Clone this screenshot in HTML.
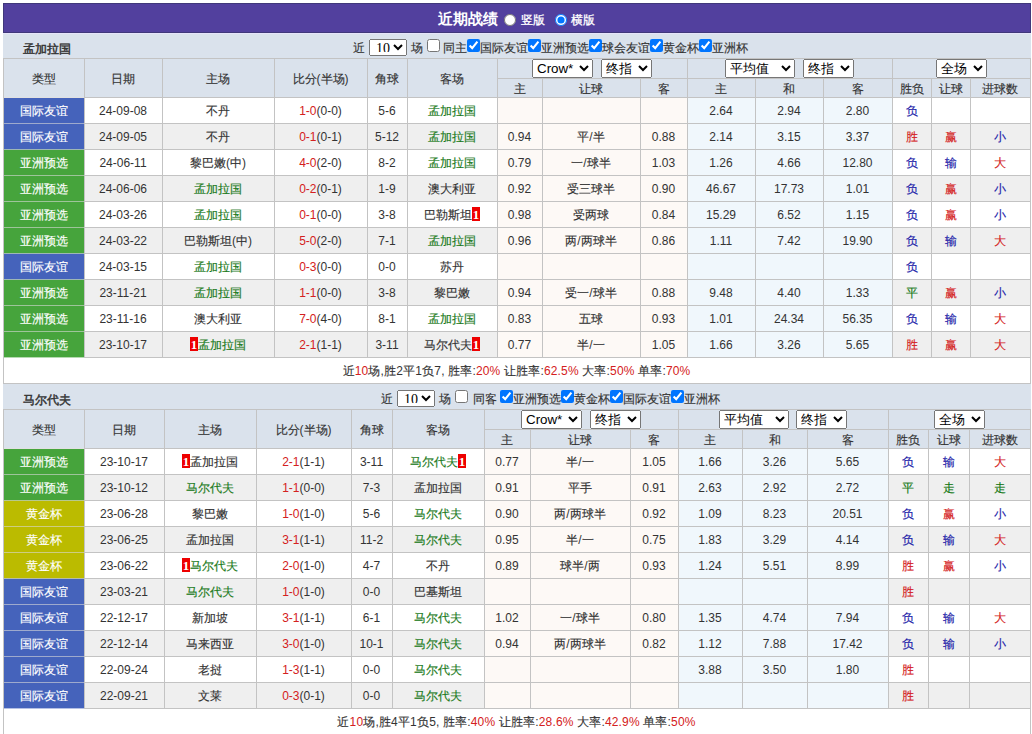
<!DOCTYPE html><html><head><meta charset="utf-8"><style>
html,body{margin:0;padding:0;background:#fff;}
body{width:1032px;height:734px;overflow:hidden;position:relative;font-family:"Liberation Sans",sans-serif;font-size:12px;color:#333;}
.a{position:absolute;}
.t{text-align:center;white-space:nowrap;overflow:visible;}
.tn i{-webkit-text-stroke:0.45px #333;}
i{font-style:normal;-webkit-text-stroke:0.15px currentColor;}
.rd{margin:0;width:12px;height:12px;}
.ctl{color:#333;font-size:12px;}
.cb{margin:0;width:13px;height:13px;}
.s10{font-family:"Liberation Serif",serif;font-size:14px;height:17px;width:38px;padding:0 0 3px 2px;margin:0;}
.sel{font-family:"Liberation Sans",sans-serif;font-size:13.33px;height:19px;padding:0;margin:0;}
.bd{display:inline-block;background:#e00;color:#fff;width:8px;height:14px;line-height:15px;font-family:"Liberation Serif",serif;font-weight:bold;font-size:13px;text-align:center;vertical-align:middle;position:relative;top:-1.5px}
</style></head><body>
<div class="a" style="left:3px;top:3px;width:1028px;height:30px;box-sizing:border-box;border:1px solid #40387a;background:#52409e"></div>
<div class="a" style="left:438px;top:10px;white-space:nowrap;color:#fff;font-weight:bold;font-size:15px;line-height:18px">近期战绩</div>
<input type="radio" name="v" class="a rd" style="left:504px;top:14px">
<div class="a" style="left:521px;top:12px;white-space:nowrap;color:#fff;font-size:12px;line-height:16px;-webkit-text-stroke:0.3px #fff">竖版</div>
<input type="radio" name="v" class="a rd" checked style="left:554.5px;top:14px">
<div class="a" style="left:571px;top:12px;white-space:nowrap;color:#fff;font-size:12px;line-height:16px;-webkit-text-stroke:0.3px #fff">横版</div>
<div class="a" style="left:3px;top:33px;width:1028px;height:25px;background:#dae2ec;"></div>
<div class="a" style="left:3px;top:33px;width:1028px;height:1px;background:#e6e4fa;"></div>
<div class="a t" style="left:23px;top:37px;width:200px;height:25px;line-height:25px;text-align:left;"><span class="tn"><i>孟加拉国</i></span></div>
<div class="a ctl" style="left:352.8px;top:40px;line-height:16px;white-space:nowrap"><i>近</i></div><select class="a s10" style="left:369px;top:39px"><option>10</option></select><div class="a ctl" style="left:410.8px;top:40px;line-height:16px;white-space:nowrap"><i>场</i></div><input type="checkbox" class="a cb" style="left:427px;top:39px"><div class="a ctl" style="left:443.4px;top:40px;line-height:16px;white-space:nowrap"><i>同主</i></div><input type="checkbox" class="a cb" checked style="left:467px;top:39px"><div class="a ctl" style="left:480px;top:40px;line-height:16px;white-space:nowrap"><i>国际友谊</i></div><input type="checkbox" class="a cb" checked style="left:528px;top:39px"><div class="a ctl" style="left:541px;top:40px;line-height:16px;white-space:nowrap"><i>亚洲预选</i></div><input type="checkbox" class="a cb" checked style="left:589px;top:39px"><div class="a ctl" style="left:602px;top:40px;line-height:16px;white-space:nowrap"><i>球会友谊</i></div><input type="checkbox" class="a cb" checked style="left:650px;top:39px"><div class="a ctl" style="left:663px;top:40px;line-height:16px;white-space:nowrap"><i>黄金杯</i></div><input type="checkbox" class="a cb" checked style="left:699px;top:39px"><div class="a ctl" style="left:712px;top:40px;line-height:16px;white-space:nowrap"><i>亚洲杯</i></div>
<div class="a" style="left:3px;top:58px;width:1028px;height:39px;background:#dae2ec;"></div>
<div class="a" style="left:3px;top:97px;width:1028px;height:26px;background:#ffffff;"></div>
<div class="a" style="left:4px;top:98px;width:80px;height:25px;background:#4563bb;"></div>
<div class="a" style="left:498px;top:98px;width:190px;height:25px;background:#fdf9f6;"></div>
<div class="a" style="left:688px;top:98px;width:205px;height:25px;background:#f0f7fc;"></div>
<div class="a" style="left:3px;top:123px;width:1028px;height:26px;background:#efefef;"></div>
<div class="a" style="left:4px;top:124px;width:80px;height:25px;background:#4563bb;"></div>
<div class="a" style="left:498px;top:124px;width:190px;height:25px;background:#fdf9f6;"></div>
<div class="a" style="left:688px;top:124px;width:205px;height:25px;background:#f0f7fc;"></div>
<div class="a" style="left:3px;top:149px;width:1028px;height:26px;background:#ffffff;"></div>
<div class="a" style="left:4px;top:150px;width:80px;height:25px;background:#46a43c;"></div>
<div class="a" style="left:498px;top:150px;width:190px;height:25px;background:#fdf9f6;"></div>
<div class="a" style="left:688px;top:150px;width:205px;height:25px;background:#f0f7fc;"></div>
<div class="a" style="left:3px;top:175px;width:1028px;height:26px;background:#efefef;"></div>
<div class="a" style="left:4px;top:176px;width:80px;height:25px;background:#46a43c;"></div>
<div class="a" style="left:498px;top:176px;width:190px;height:25px;background:#fdf9f6;"></div>
<div class="a" style="left:688px;top:176px;width:205px;height:25px;background:#f0f7fc;"></div>
<div class="a" style="left:3px;top:201px;width:1028px;height:26px;background:#ffffff;"></div>
<div class="a" style="left:4px;top:202px;width:80px;height:25px;background:#46a43c;"></div>
<div class="a" style="left:498px;top:202px;width:190px;height:25px;background:#fdf9f6;"></div>
<div class="a" style="left:688px;top:202px;width:205px;height:25px;background:#f0f7fc;"></div>
<div class="a" style="left:3px;top:227px;width:1028px;height:26px;background:#efefef;"></div>
<div class="a" style="left:4px;top:228px;width:80px;height:25px;background:#46a43c;"></div>
<div class="a" style="left:498px;top:228px;width:190px;height:25px;background:#fdf9f6;"></div>
<div class="a" style="left:688px;top:228px;width:205px;height:25px;background:#f0f7fc;"></div>
<div class="a" style="left:3px;top:253px;width:1028px;height:26px;background:#ffffff;"></div>
<div class="a" style="left:4px;top:254px;width:80px;height:25px;background:#4563bb;"></div>
<div class="a" style="left:498px;top:254px;width:190px;height:25px;background:#fdf9f6;"></div>
<div class="a" style="left:688px;top:254px;width:205px;height:25px;background:#f0f7fc;"></div>
<div class="a" style="left:3px;top:279px;width:1028px;height:26px;background:#efefef;"></div>
<div class="a" style="left:4px;top:280px;width:80px;height:25px;background:#46a43c;"></div>
<div class="a" style="left:498px;top:280px;width:190px;height:25px;background:#fdf9f6;"></div>
<div class="a" style="left:688px;top:280px;width:205px;height:25px;background:#f0f7fc;"></div>
<div class="a" style="left:3px;top:305px;width:1028px;height:26px;background:#ffffff;"></div>
<div class="a" style="left:4px;top:306px;width:80px;height:25px;background:#46a43c;"></div>
<div class="a" style="left:498px;top:306px;width:190px;height:25px;background:#fdf9f6;"></div>
<div class="a" style="left:688px;top:306px;width:205px;height:25px;background:#f0f7fc;"></div>
<div class="a" style="left:3px;top:331px;width:1028px;height:26px;background:#efefef;"></div>
<div class="a" style="left:4px;top:332px;width:80px;height:25px;background:#46a43c;"></div>
<div class="a" style="left:498px;top:332px;width:190px;height:25px;background:#fdf9f6;"></div>
<div class="a" style="left:688px;top:332px;width:205px;height:25px;background:#f0f7fc;"></div>
<div class="a" style="left:3px;top:357px;width:1028px;height:26px;background:#ffffff;"></div>
<div class="a" style="left:3px;top:58px;width:1028px;height:1px;background:#c3c3c3;"></div>
<div class="a" style="left:497px;top:78px;width:534px;height:1px;background:#c3c3c3;"></div>
<div class="a" style="left:3px;top:97px;width:1028px;height:1px;background:#c3c3c3;"></div>
<div class="a" style="left:3px;top:123px;width:1028px;height:1px;background:#c3c3c3;"></div>
<div class="a" style="left:3px;top:149px;width:1028px;height:1px;background:#c3c3c3;"></div>
<div class="a" style="left:3px;top:175px;width:1028px;height:1px;background:#c3c3c3;"></div>
<div class="a" style="left:3px;top:201px;width:1028px;height:1px;background:#c3c3c3;"></div>
<div class="a" style="left:3px;top:227px;width:1028px;height:1px;background:#c3c3c3;"></div>
<div class="a" style="left:3px;top:253px;width:1028px;height:1px;background:#c3c3c3;"></div>
<div class="a" style="left:3px;top:279px;width:1028px;height:1px;background:#c3c3c3;"></div>
<div class="a" style="left:3px;top:305px;width:1028px;height:1px;background:#c3c3c3;"></div>
<div class="a" style="left:3px;top:331px;width:1028px;height:1px;background:#c3c3c3;"></div>
<div class="a" style="left:3px;top:357px;width:1028px;height:1px;background:#c3c3c3;"></div>
<div class="a" style="left:3px;top:383px;width:1028px;height:1px;background:#c3c3c3;"></div>
<div class="a" style="left:3px;top:58px;width:1px;height:326px;background:#c3c3c3;"></div>
<div class="a" style="left:1030px;top:58px;width:1px;height:326px;background:#c3c3c3;"></div>
<div class="a" style="left:84px;top:58px;width:1px;height:300px;background:#c3c3c3;"></div>
<div class="a" style="left:162px;top:58px;width:1px;height:300px;background:#c3c3c3;"></div>
<div class="a" style="left:274px;top:58px;width:1px;height:300px;background:#c3c3c3;"></div>
<div class="a" style="left:367px;top:58px;width:1px;height:300px;background:#c3c3c3;"></div>
<div class="a" style="left:407px;top:58px;width:1px;height:300px;background:#c3c3c3;"></div>
<div class="a" style="left:497px;top:58px;width:1px;height:300px;background:#c3c3c3;"></div>
<div class="a" style="left:542px;top:78px;width:1px;height:280px;background:#c3c3c3;"></div>
<div class="a" style="left:640px;top:78px;width:1px;height:280px;background:#c3c3c3;"></div>
<div class="a" style="left:687px;top:58px;width:1px;height:300px;background:#c3c3c3;"></div>
<div class="a" style="left:755px;top:78px;width:1px;height:280px;background:#c3c3c3;"></div>
<div class="a" style="left:823px;top:78px;width:1px;height:280px;background:#c3c3c3;"></div>
<div class="a" style="left:892px;top:58px;width:1px;height:300px;background:#c3c3c3;"></div>
<div class="a" style="left:931px;top:78px;width:1px;height:280px;background:#c3c3c3;"></div>
<div class="a" style="left:970px;top:78px;width:1px;height:280px;background:#c3c3c3;"></div>
<div class="a" style="left:4px;top:98px;width:80px;height:26px;background:#4563bb;"></div>
<div class="a" style="left:4px;top:124px;width:80px;height:26px;background:#4563bb;"></div>
<div class="a" style="left:4px;top:123px;width:80px;height:1px;background:rgb(158,170,205);"></div>
<div class="a" style="left:4px;top:150px;width:80px;height:26px;background:#46a43c;"></div>
<div class="a" style="left:4px;top:149px;width:80px;height:1px;background:rgb(158,183,180);"></div>
<div class="a" style="left:4px;top:176px;width:80px;height:26px;background:#46a43c;"></div>
<div class="a" style="left:4px;top:175px;width:80px;height:1px;background:rgb(158,196,154);"></div>
<div class="a" style="left:4px;top:202px;width:80px;height:26px;background:#46a43c;"></div>
<div class="a" style="left:4px;top:201px;width:80px;height:1px;background:rgb(158,196,154);"></div>
<div class="a" style="left:4px;top:228px;width:80px;height:26px;background:#46a43c;"></div>
<div class="a" style="left:4px;top:227px;width:80px;height:1px;background:rgb(158,196,154);"></div>
<div class="a" style="left:4px;top:254px;width:80px;height:26px;background:#4563bb;"></div>
<div class="a" style="left:4px;top:253px;width:80px;height:1px;background:rgb(158,183,180);"></div>
<div class="a" style="left:4px;top:280px;width:80px;height:26px;background:#46a43c;"></div>
<div class="a" style="left:4px;top:279px;width:80px;height:1px;background:rgb(158,183,180);"></div>
<div class="a" style="left:4px;top:306px;width:80px;height:26px;background:#46a43c;"></div>
<div class="a" style="left:4px;top:305px;width:80px;height:1px;background:rgb(158,196,154);"></div>
<div class="a" style="left:4px;top:332px;width:80px;height:26px;background:#46a43c;"></div>
<div class="a" style="left:4px;top:331px;width:80px;height:1px;background:rgb(158,196,154);"></div>
<div class="a" style="left:4px;top:97px;width:80px;height:1px;background:rgba(255,255,255,0.5);"></div>
<div class="a" style="left:4px;top:357px;width:80px;height:1px;background:rgba(255,255,255,0.6);"></div>
<div class="a t" style="left:3.5px;top:59.5px;width:80px;height:38px;line-height:38px;color:#333333"><i>类型</i></div>
<div class="a t" style="left:84.5px;top:59.5px;width:77px;height:38px;line-height:38px;color:#333333"><i>日期</i></div>
<div class="a t" style="left:162.5px;top:59.5px;width:111px;height:38px;line-height:38px;color:#333333"><i>主场</i></div>
<div class="a t" style="left:274.5px;top:59.5px;width:92px;height:38px;line-height:38px;color:#333333"><i>比分</i>(<i>半场</i>)</div>
<div class="a t" style="left:367.5px;top:59.5px;width:39px;height:38px;line-height:38px;color:#333333"><i>角球</i></div>
<div class="a t" style="left:407.5px;top:59.5px;width:89px;height:38px;line-height:38px;color:#333333"><i>客场</i></div>
<div class="a t" style="left:497.5px;top:80px;width:44px;height:18px;line-height:18px;color:#333333"><i>主</i></div>
<div class="a t" style="left:542.5px;top:80px;width:97px;height:18px;line-height:18px;color:#333333"><i>让球</i></div>
<div class="a t" style="left:640.5px;top:80px;width:46px;height:18px;line-height:18px;color:#333333"><i>客</i></div>
<div class="a t" style="left:687.5px;top:80px;width:67px;height:18px;line-height:18px;color:#333333"><i>主</i></div>
<div class="a t" style="left:755.5px;top:80px;width:67px;height:18px;line-height:18px;color:#333333"><i>和</i></div>
<div class="a t" style="left:823.5px;top:80px;width:68px;height:18px;line-height:18px;color:#333333"><i>客</i></div>
<div class="a t" style="left:892.5px;top:80px;width:38px;height:18px;line-height:18px;color:#333333"><i>胜负</i></div>
<div class="a t" style="left:931.5px;top:80px;width:38px;height:18px;line-height:18px;color:#333333"><i>让球</i></div>
<div class="a t" style="left:970.5px;top:80px;width:59px;height:18px;line-height:18px;color:#333333"><i>进球数</i></div>
<select class="a sel" style="left:532px;top:59px;width:61px"><option>Crow*</option></select><select class="a sel" style="left:601px;top:59px;width:51px"><option>终指</option></select><select class="a sel" style="left:725px;top:59px;width:70px"><option>平均值</option></select><select class="a sel" style="left:803px;top:59px;width:51px"><option>终指</option></select><select class="a sel" style="left:936px;top:59px;width:51px"><option>全场</option></select>
<div class="a t" style="left:3.5px;top:99px;width:80px;height:25px;line-height:25px;color:#fff"><i>国际友谊</i></div>
<div class="a t" style="left:84.5px;top:99px;width:77px;height:25px;line-height:25px;color:#333333">24-09-08</div>
<div class="a t" style="left:162.5px;top:99px;width:111px;height:25px;line-height:25px;color:#333333"><i>不丹</i></div>
<div class="a t" style="left:274.5px;top:99px;width:92px;height:25px;line-height:25px;color:#333333"><span style="color:#d42020">1-0</span>(0-0)</div>
<div class="a t" style="left:367.5px;top:99px;width:39px;height:25px;line-height:25px;color:#333333">5-6</div>
<div class="a t" style="left:407.5px;top:99px;width:89px;height:25px;line-height:25px;color:#333333"><span style="color:#1a7a1a"><i>孟加拉国</i></span></div>
<div class="a t" style="left:687.5px;top:99px;width:67px;height:25px;line-height:25px;color:#333333">2.64</div>
<div class="a t" style="left:755.5px;top:99px;width:67px;height:25px;line-height:25px;color:#333333">2.94</div>
<div class="a t" style="left:823.5px;top:99px;width:68px;height:25px;line-height:25px;color:#333333">2.80</div>
<div class="a t" style="left:892.5px;top:99px;width:38px;height:25px;line-height:25px;color:#333333"><span style="color:#1a1aa8"><i>负</i></span></div>
<div class="a t" style="left:3.5px;top:125px;width:80px;height:25px;line-height:25px;color:#fff"><i>国际友谊</i></div>
<div class="a t" style="left:84.5px;top:125px;width:77px;height:25px;line-height:25px;color:#333333">24-09-05</div>
<div class="a t" style="left:162.5px;top:125px;width:111px;height:25px;line-height:25px;color:#333333"><i>不丹</i></div>
<div class="a t" style="left:274.5px;top:125px;width:92px;height:25px;line-height:25px;color:#333333"><span style="color:#d42020">0-1</span>(0-1)</div>
<div class="a t" style="left:367.5px;top:125px;width:39px;height:25px;line-height:25px;color:#333333">5-12</div>
<div class="a t" style="left:407.5px;top:125px;width:89px;height:25px;line-height:25px;color:#333333"><span style="color:#1a7a1a"><i>孟加拉国</i></span></div>
<div class="a t" style="left:497.5px;top:125px;width:44px;height:25px;line-height:25px;color:#333333">0.94</div>
<div class="a t" style="left:542.5px;top:125px;width:97px;height:25px;line-height:25px;color:#333333"><i>平</i>/<i>半</i></div>
<div class="a t" style="left:640.5px;top:125px;width:46px;height:25px;line-height:25px;color:#333333">0.88</div>
<div class="a t" style="left:687.5px;top:125px;width:67px;height:25px;line-height:25px;color:#333333">2.14</div>
<div class="a t" style="left:755.5px;top:125px;width:67px;height:25px;line-height:25px;color:#333333">3.15</div>
<div class="a t" style="left:823.5px;top:125px;width:68px;height:25px;line-height:25px;color:#333333">3.37</div>
<div class="a t" style="left:892.5px;top:125px;width:38px;height:25px;line-height:25px;color:#333333"><span style="color:#d42020"><i>胜</i></span></div>
<div class="a t" style="left:931.5px;top:125px;width:38px;height:25px;line-height:25px;color:#333333"><span style="color:#d42020"><i>赢</i></span></div>
<div class="a t" style="left:970.5px;top:125px;width:59px;height:25px;line-height:25px;color:#333333"><span style="color:#1a1aa8"><i>小</i></span></div>
<div class="a t" style="left:3.5px;top:151px;width:80px;height:25px;line-height:25px;color:#fff"><i>亚洲预选</i></div>
<div class="a t" style="left:84.5px;top:151px;width:77px;height:25px;line-height:25px;color:#333333">24-06-11</div>
<div class="a t" style="left:162.5px;top:151px;width:111px;height:25px;line-height:25px;color:#333333"><i>黎巴嫩</i>(<i>中</i>)</div>
<div class="a t" style="left:274.5px;top:151px;width:92px;height:25px;line-height:25px;color:#333333"><span style="color:#d42020">4-0</span>(2-0)</div>
<div class="a t" style="left:367.5px;top:151px;width:39px;height:25px;line-height:25px;color:#333333">8-2</div>
<div class="a t" style="left:407.5px;top:151px;width:89px;height:25px;line-height:25px;color:#333333"><span style="color:#1a7a1a"><i>孟加拉国</i></span></div>
<div class="a t" style="left:497.5px;top:151px;width:44px;height:25px;line-height:25px;color:#333333">0.79</div>
<div class="a t" style="left:542.5px;top:151px;width:97px;height:25px;line-height:25px;color:#333333"><i>一</i>/<i>球半</i></div>
<div class="a t" style="left:640.5px;top:151px;width:46px;height:25px;line-height:25px;color:#333333">1.03</div>
<div class="a t" style="left:687.5px;top:151px;width:67px;height:25px;line-height:25px;color:#333333">1.26</div>
<div class="a t" style="left:755.5px;top:151px;width:67px;height:25px;line-height:25px;color:#333333">4.66</div>
<div class="a t" style="left:823.5px;top:151px;width:68px;height:25px;line-height:25px;color:#333333">12.80</div>
<div class="a t" style="left:892.5px;top:151px;width:38px;height:25px;line-height:25px;color:#333333"><span style="color:#1a1aa8"><i>负</i></span></div>
<div class="a t" style="left:931.5px;top:151px;width:38px;height:25px;line-height:25px;color:#333333"><span style="color:#1a1aa8"><i>输</i></span></div>
<div class="a t" style="left:970.5px;top:151px;width:59px;height:25px;line-height:25px;color:#333333"><span style="color:#d42020"><i>大</i></span></div>
<div class="a t" style="left:3.5px;top:177px;width:80px;height:25px;line-height:25px;color:#fff"><i>亚洲预选</i></div>
<div class="a t" style="left:84.5px;top:177px;width:77px;height:25px;line-height:25px;color:#333333">24-06-06</div>
<div class="a t" style="left:162.5px;top:177px;width:111px;height:25px;line-height:25px;color:#333333"><span style="color:#1a7a1a"><i>孟加拉国</i></span></div>
<div class="a t" style="left:274.5px;top:177px;width:92px;height:25px;line-height:25px;color:#333333"><span style="color:#d42020">0-2</span>(0-1)</div>
<div class="a t" style="left:367.5px;top:177px;width:39px;height:25px;line-height:25px;color:#333333">1-9</div>
<div class="a t" style="left:407.5px;top:177px;width:89px;height:25px;line-height:25px;color:#333333"><i>澳大利亚</i></div>
<div class="a t" style="left:497.5px;top:177px;width:44px;height:25px;line-height:25px;color:#333333">0.92</div>
<div class="a t" style="left:542.5px;top:177px;width:97px;height:25px;line-height:25px;color:#333333"><i>受三球半</i></div>
<div class="a t" style="left:640.5px;top:177px;width:46px;height:25px;line-height:25px;color:#333333">0.90</div>
<div class="a t" style="left:687.5px;top:177px;width:67px;height:25px;line-height:25px;color:#333333">46.67</div>
<div class="a t" style="left:755.5px;top:177px;width:67px;height:25px;line-height:25px;color:#333333">17.73</div>
<div class="a t" style="left:823.5px;top:177px;width:68px;height:25px;line-height:25px;color:#333333">1.01</div>
<div class="a t" style="left:892.5px;top:177px;width:38px;height:25px;line-height:25px;color:#333333"><span style="color:#1a1aa8"><i>负</i></span></div>
<div class="a t" style="left:931.5px;top:177px;width:38px;height:25px;line-height:25px;color:#333333"><span style="color:#d42020"><i>赢</i></span></div>
<div class="a t" style="left:970.5px;top:177px;width:59px;height:25px;line-height:25px;color:#333333"><span style="color:#1a1aa8"><i>小</i></span></div>
<div class="a t" style="left:3.5px;top:203px;width:80px;height:25px;line-height:25px;color:#fff"><i>亚洲预选</i></div>
<div class="a t" style="left:84.5px;top:203px;width:77px;height:25px;line-height:25px;color:#333333">24-03-26</div>
<div class="a t" style="left:162.5px;top:203px;width:111px;height:25px;line-height:25px;color:#333333"><span style="color:#1a7a1a"><i>孟加拉国</i></span></div>
<div class="a t" style="left:274.5px;top:203px;width:92px;height:25px;line-height:25px;color:#333333"><span style="color:#d42020">0-1</span>(0-0)</div>
<div class="a t" style="left:367.5px;top:203px;width:39px;height:25px;line-height:25px;color:#333333">3-8</div>
<div class="a t" style="left:407.5px;top:203px;width:89px;height:25px;line-height:25px;color:#333333"><i>巴勒斯坦</i><span class="bd">1</span></div>
<div class="a t" style="left:497.5px;top:203px;width:44px;height:25px;line-height:25px;color:#333333">0.98</div>
<div class="a t" style="left:542.5px;top:203px;width:97px;height:25px;line-height:25px;color:#333333"><i>受两球</i></div>
<div class="a t" style="left:640.5px;top:203px;width:46px;height:25px;line-height:25px;color:#333333">0.84</div>
<div class="a t" style="left:687.5px;top:203px;width:67px;height:25px;line-height:25px;color:#333333">15.29</div>
<div class="a t" style="left:755.5px;top:203px;width:67px;height:25px;line-height:25px;color:#333333">6.52</div>
<div class="a t" style="left:823.5px;top:203px;width:68px;height:25px;line-height:25px;color:#333333">1.15</div>
<div class="a t" style="left:892.5px;top:203px;width:38px;height:25px;line-height:25px;color:#333333"><span style="color:#1a1aa8"><i>负</i></span></div>
<div class="a t" style="left:931.5px;top:203px;width:38px;height:25px;line-height:25px;color:#333333"><span style="color:#d42020"><i>赢</i></span></div>
<div class="a t" style="left:970.5px;top:203px;width:59px;height:25px;line-height:25px;color:#333333"><span style="color:#1a1aa8"><i>小</i></span></div>
<div class="a t" style="left:3.5px;top:229px;width:80px;height:25px;line-height:25px;color:#fff"><i>亚洲预选</i></div>
<div class="a t" style="left:84.5px;top:229px;width:77px;height:25px;line-height:25px;color:#333333">24-03-22</div>
<div class="a t" style="left:162.5px;top:229px;width:111px;height:25px;line-height:25px;color:#333333"><i>巴勒斯坦</i>(<i>中</i>)</div>
<div class="a t" style="left:274.5px;top:229px;width:92px;height:25px;line-height:25px;color:#333333"><span style="color:#d42020">5-0</span>(2-0)</div>
<div class="a t" style="left:367.5px;top:229px;width:39px;height:25px;line-height:25px;color:#333333">7-1</div>
<div class="a t" style="left:407.5px;top:229px;width:89px;height:25px;line-height:25px;color:#333333"><span style="color:#1a7a1a"><i>孟加拉国</i></span></div>
<div class="a t" style="left:497.5px;top:229px;width:44px;height:25px;line-height:25px;color:#333333">0.96</div>
<div class="a t" style="left:542.5px;top:229px;width:97px;height:25px;line-height:25px;color:#333333"><i>两</i>/<i>两球半</i></div>
<div class="a t" style="left:640.5px;top:229px;width:46px;height:25px;line-height:25px;color:#333333">0.86</div>
<div class="a t" style="left:687.5px;top:229px;width:67px;height:25px;line-height:25px;color:#333333">1.11</div>
<div class="a t" style="left:755.5px;top:229px;width:67px;height:25px;line-height:25px;color:#333333">7.42</div>
<div class="a t" style="left:823.5px;top:229px;width:68px;height:25px;line-height:25px;color:#333333">19.90</div>
<div class="a t" style="left:892.5px;top:229px;width:38px;height:25px;line-height:25px;color:#333333"><span style="color:#1a1aa8"><i>负</i></span></div>
<div class="a t" style="left:931.5px;top:229px;width:38px;height:25px;line-height:25px;color:#333333"><span style="color:#1a1aa8"><i>输</i></span></div>
<div class="a t" style="left:970.5px;top:229px;width:59px;height:25px;line-height:25px;color:#333333"><span style="color:#d42020"><i>大</i></span></div>
<div class="a t" style="left:3.5px;top:255px;width:80px;height:25px;line-height:25px;color:#fff"><i>国际友谊</i></div>
<div class="a t" style="left:84.5px;top:255px;width:77px;height:25px;line-height:25px;color:#333333">24-03-15</div>
<div class="a t" style="left:162.5px;top:255px;width:111px;height:25px;line-height:25px;color:#333333"><span style="color:#1a7a1a"><i>孟加拉国</i></span></div>
<div class="a t" style="left:274.5px;top:255px;width:92px;height:25px;line-height:25px;color:#333333"><span style="color:#d42020">0-3</span>(0-0)</div>
<div class="a t" style="left:367.5px;top:255px;width:39px;height:25px;line-height:25px;color:#333333">0-0</div>
<div class="a t" style="left:407.5px;top:255px;width:89px;height:25px;line-height:25px;color:#333333"><i>苏丹</i></div>
<div class="a t" style="left:892.5px;top:255px;width:38px;height:25px;line-height:25px;color:#333333"><span style="color:#1a1aa8"><i>负</i></span></div>
<div class="a t" style="left:3.5px;top:281px;width:80px;height:25px;line-height:25px;color:#fff"><i>亚洲预选</i></div>
<div class="a t" style="left:84.5px;top:281px;width:77px;height:25px;line-height:25px;color:#333333">23-11-21</div>
<div class="a t" style="left:162.5px;top:281px;width:111px;height:25px;line-height:25px;color:#333333"><span style="color:#1a7a1a"><i>孟加拉国</i></span></div>
<div class="a t" style="left:274.5px;top:281px;width:92px;height:25px;line-height:25px;color:#333333"><span style="color:#d42020">1-1</span>(0-0)</div>
<div class="a t" style="left:367.5px;top:281px;width:39px;height:25px;line-height:25px;color:#333333">3-8</div>
<div class="a t" style="left:407.5px;top:281px;width:89px;height:25px;line-height:25px;color:#333333"><i>黎巴嫩</i></div>
<div class="a t" style="left:497.5px;top:281px;width:44px;height:25px;line-height:25px;color:#333333">0.94</div>
<div class="a t" style="left:542.5px;top:281px;width:97px;height:25px;line-height:25px;color:#333333"><i>受一</i>/<i>球半</i></div>
<div class="a t" style="left:640.5px;top:281px;width:46px;height:25px;line-height:25px;color:#333333">0.88</div>
<div class="a t" style="left:687.5px;top:281px;width:67px;height:25px;line-height:25px;color:#333333">9.48</div>
<div class="a t" style="left:755.5px;top:281px;width:67px;height:25px;line-height:25px;color:#333333">4.40</div>
<div class="a t" style="left:823.5px;top:281px;width:68px;height:25px;line-height:25px;color:#333333">1.33</div>
<div class="a t" style="left:892.5px;top:281px;width:38px;height:25px;line-height:25px;color:#333333"><span style="color:#117711"><i>平</i></span></div>
<div class="a t" style="left:931.5px;top:281px;width:38px;height:25px;line-height:25px;color:#333333"><span style="color:#d42020"><i>赢</i></span></div>
<div class="a t" style="left:970.5px;top:281px;width:59px;height:25px;line-height:25px;color:#333333"><span style="color:#1a1aa8"><i>小</i></span></div>
<div class="a t" style="left:3.5px;top:307px;width:80px;height:25px;line-height:25px;color:#fff"><i>亚洲预选</i></div>
<div class="a t" style="left:84.5px;top:307px;width:77px;height:25px;line-height:25px;color:#333333">23-11-16</div>
<div class="a t" style="left:162.5px;top:307px;width:111px;height:25px;line-height:25px;color:#333333"><i>澳大利亚</i></div>
<div class="a t" style="left:274.5px;top:307px;width:92px;height:25px;line-height:25px;color:#333333"><span style="color:#d42020">7-0</span>(4-0)</div>
<div class="a t" style="left:367.5px;top:307px;width:39px;height:25px;line-height:25px;color:#333333">8-1</div>
<div class="a t" style="left:407.5px;top:307px;width:89px;height:25px;line-height:25px;color:#333333"><span style="color:#1a7a1a"><i>孟加拉国</i></span></div>
<div class="a t" style="left:497.5px;top:307px;width:44px;height:25px;line-height:25px;color:#333333">0.83</div>
<div class="a t" style="left:542.5px;top:307px;width:97px;height:25px;line-height:25px;color:#333333"><i>五球</i></div>
<div class="a t" style="left:640.5px;top:307px;width:46px;height:25px;line-height:25px;color:#333333">0.93</div>
<div class="a t" style="left:687.5px;top:307px;width:67px;height:25px;line-height:25px;color:#333333">1.01</div>
<div class="a t" style="left:755.5px;top:307px;width:67px;height:25px;line-height:25px;color:#333333">24.34</div>
<div class="a t" style="left:823.5px;top:307px;width:68px;height:25px;line-height:25px;color:#333333">56.35</div>
<div class="a t" style="left:892.5px;top:307px;width:38px;height:25px;line-height:25px;color:#333333"><span style="color:#1a1aa8"><i>负</i></span></div>
<div class="a t" style="left:931.5px;top:307px;width:38px;height:25px;line-height:25px;color:#333333"><span style="color:#1a1aa8"><i>输</i></span></div>
<div class="a t" style="left:970.5px;top:307px;width:59px;height:25px;line-height:25px;color:#333333"><span style="color:#d42020"><i>大</i></span></div>
<div class="a t" style="left:3.5px;top:333px;width:80px;height:25px;line-height:25px;color:#fff"><i>亚洲预选</i></div>
<div class="a t" style="left:84.5px;top:333px;width:77px;height:25px;line-height:25px;color:#333333">23-10-17</div>
<div class="a t" style="left:162.5px;top:333px;width:111px;height:25px;line-height:25px;color:#333333"><span class="bd">1</span><span style="color:#1a7a1a"><i>孟加拉国</i></span></div>
<div class="a t" style="left:274.5px;top:333px;width:92px;height:25px;line-height:25px;color:#333333"><span style="color:#d42020">2-1</span>(1-1)</div>
<div class="a t" style="left:367.5px;top:333px;width:39px;height:25px;line-height:25px;color:#333333">3-11</div>
<div class="a t" style="left:407.5px;top:333px;width:89px;height:25px;line-height:25px;color:#333333"><i>马尔代夫</i><span class="bd">1</span></div>
<div class="a t" style="left:497.5px;top:333px;width:44px;height:25px;line-height:25px;color:#333333">0.77</div>
<div class="a t" style="left:542.5px;top:333px;width:97px;height:25px;line-height:25px;color:#333333"><i>半</i>/<i>一</i></div>
<div class="a t" style="left:640.5px;top:333px;width:46px;height:25px;line-height:25px;color:#333333">1.05</div>
<div class="a t" style="left:687.5px;top:333px;width:67px;height:25px;line-height:25px;color:#333333">1.66</div>
<div class="a t" style="left:755.5px;top:333px;width:67px;height:25px;line-height:25px;color:#333333">3.26</div>
<div class="a t" style="left:823.5px;top:333px;width:68px;height:25px;line-height:25px;color:#333333">5.65</div>
<div class="a t" style="left:892.5px;top:333px;width:38px;height:25px;line-height:25px;color:#333333"><span style="color:#d42020"><i>胜</i></span></div>
<div class="a t" style="left:931.5px;top:333px;width:38px;height:25px;line-height:25px;color:#333333"><span style="color:#d42020"><i>赢</i></span></div>
<div class="a t" style="left:970.5px;top:333px;width:59px;height:25px;line-height:25px;color:#333333"><span style="color:#d42020"><i>大</i></span></div>
<div class="a t" style="left:2.5px;top:359px;width:1028px;height:25px;line-height:25px;color:#333333;letter-spacing:0.16px"><i>近</i><span style="color:#d42020">10</span><i>场</i>,<i>胜</i>2<i>平</i>1<i>负</i>7, <i>胜率</i>:<span style="color:#d42020">20%</span> <i>让胜率</i>:<span style="color:#d42020">62.5%</span> <i>大率</i>:<span style="color:#d42020">50%</span> <i>单率</i>:<span style="color:#d42020">70%</span></div>
<div class="a" style="left:3px;top:384px;width:1028px;height:25px;background:#dae2ec;"></div>
<div class="a t" style="left:23px;top:388px;width:200px;height:25px;line-height:25px;text-align:left;"><span class="tn"><i>马尔代夫</i></span></div>
<div class="a ctl" style="left:381.3px;top:391px;line-height:16px;white-space:nowrap"><i>近</i></div><select class="a s10" style="left:397px;top:390px"><option>10</option></select><div class="a ctl" style="left:438.8px;top:391px;line-height:16px;white-space:nowrap"><i>场</i></div><input type="checkbox" class="a cb" style="left:455px;top:390px"><div class="a ctl" style="left:472.6px;top:391px;line-height:16px;white-space:nowrap"><i>同客</i></div><input type="checkbox" class="a cb" checked style="left:500px;top:390px"><div class="a ctl" style="left:513px;top:391px;line-height:16px;white-space:nowrap"><i>亚洲预选</i></div><input type="checkbox" class="a cb" checked style="left:561px;top:390px"><div class="a ctl" style="left:574px;top:391px;line-height:16px;white-space:nowrap"><i>黄金杯</i></div><input type="checkbox" class="a cb" checked style="left:610px;top:390px"><div class="a ctl" style="left:623px;top:391px;line-height:16px;white-space:nowrap"><i>国际友谊</i></div><input type="checkbox" class="a cb" checked style="left:671px;top:390px"><div class="a ctl" style="left:684px;top:391px;line-height:16px;white-space:nowrap"><i>亚洲杯</i></div>
<div class="a" style="left:3px;top:409px;width:1028px;height:39px;background:#dae2ec;"></div>
<div class="a" style="left:3px;top:448px;width:1028px;height:26px;background:#ffffff;"></div>
<div class="a" style="left:4px;top:449px;width:80px;height:25px;background:#46a43c;"></div>
<div class="a" style="left:485px;top:449px;width:194px;height:25px;background:#fdf9f6;"></div>
<div class="a" style="left:679px;top:449px;width:210px;height:25px;background:#f0f7fc;"></div>
<div class="a" style="left:3px;top:474px;width:1028px;height:26px;background:#efefef;"></div>
<div class="a" style="left:4px;top:475px;width:80px;height:25px;background:#46a43c;"></div>
<div class="a" style="left:485px;top:475px;width:194px;height:25px;background:#fdf9f6;"></div>
<div class="a" style="left:679px;top:475px;width:210px;height:25px;background:#f0f7fc;"></div>
<div class="a" style="left:3px;top:500px;width:1028px;height:26px;background:#ffffff;"></div>
<div class="a" style="left:4px;top:501px;width:80px;height:25px;background:#bbbb00;"></div>
<div class="a" style="left:485px;top:501px;width:194px;height:25px;background:#fdf9f6;"></div>
<div class="a" style="left:679px;top:501px;width:210px;height:25px;background:#f0f7fc;"></div>
<div class="a" style="left:3px;top:526px;width:1028px;height:26px;background:#efefef;"></div>
<div class="a" style="left:4px;top:527px;width:80px;height:25px;background:#bbbb00;"></div>
<div class="a" style="left:485px;top:527px;width:194px;height:25px;background:#fdf9f6;"></div>
<div class="a" style="left:679px;top:527px;width:210px;height:25px;background:#f0f7fc;"></div>
<div class="a" style="left:3px;top:552px;width:1028px;height:26px;background:#ffffff;"></div>
<div class="a" style="left:4px;top:553px;width:80px;height:25px;background:#bbbb00;"></div>
<div class="a" style="left:485px;top:553px;width:194px;height:25px;background:#fdf9f6;"></div>
<div class="a" style="left:679px;top:553px;width:210px;height:25px;background:#f0f7fc;"></div>
<div class="a" style="left:3px;top:578px;width:1028px;height:26px;background:#efefef;"></div>
<div class="a" style="left:4px;top:579px;width:80px;height:25px;background:#4563bb;"></div>
<div class="a" style="left:485px;top:579px;width:194px;height:25px;background:#fdf9f6;"></div>
<div class="a" style="left:679px;top:579px;width:210px;height:25px;background:#f0f7fc;"></div>
<div class="a" style="left:3px;top:604px;width:1028px;height:26px;background:#ffffff;"></div>
<div class="a" style="left:4px;top:605px;width:80px;height:25px;background:#4563bb;"></div>
<div class="a" style="left:485px;top:605px;width:194px;height:25px;background:#fdf9f6;"></div>
<div class="a" style="left:679px;top:605px;width:210px;height:25px;background:#f0f7fc;"></div>
<div class="a" style="left:3px;top:630px;width:1028px;height:26px;background:#efefef;"></div>
<div class="a" style="left:4px;top:631px;width:80px;height:25px;background:#4563bb;"></div>
<div class="a" style="left:485px;top:631px;width:194px;height:25px;background:#fdf9f6;"></div>
<div class="a" style="left:679px;top:631px;width:210px;height:25px;background:#f0f7fc;"></div>
<div class="a" style="left:3px;top:656px;width:1028px;height:26px;background:#ffffff;"></div>
<div class="a" style="left:4px;top:657px;width:80px;height:25px;background:#4563bb;"></div>
<div class="a" style="left:485px;top:657px;width:194px;height:25px;background:#fdf9f6;"></div>
<div class="a" style="left:679px;top:657px;width:210px;height:25px;background:#f0f7fc;"></div>
<div class="a" style="left:3px;top:682px;width:1028px;height:26px;background:#efefef;"></div>
<div class="a" style="left:4px;top:683px;width:80px;height:25px;background:#4563bb;"></div>
<div class="a" style="left:485px;top:683px;width:194px;height:25px;background:#fdf9f6;"></div>
<div class="a" style="left:679px;top:683px;width:210px;height:25px;background:#f0f7fc;"></div>
<div class="a" style="left:3px;top:708px;width:1028px;height:26px;background:#ffffff;"></div>
<div class="a" style="left:3px;top:409px;width:1028px;height:1px;background:#c3c3c3;"></div>
<div class="a" style="left:484px;top:429px;width:547px;height:1px;background:#c3c3c3;"></div>
<div class="a" style="left:3px;top:448px;width:1028px;height:1px;background:#c3c3c3;"></div>
<div class="a" style="left:3px;top:474px;width:1028px;height:1px;background:#c3c3c3;"></div>
<div class="a" style="left:3px;top:500px;width:1028px;height:1px;background:#c3c3c3;"></div>
<div class="a" style="left:3px;top:526px;width:1028px;height:1px;background:#c3c3c3;"></div>
<div class="a" style="left:3px;top:552px;width:1028px;height:1px;background:#c3c3c3;"></div>
<div class="a" style="left:3px;top:578px;width:1028px;height:1px;background:#c3c3c3;"></div>
<div class="a" style="left:3px;top:604px;width:1028px;height:1px;background:#c3c3c3;"></div>
<div class="a" style="left:3px;top:630px;width:1028px;height:1px;background:#c3c3c3;"></div>
<div class="a" style="left:3px;top:656px;width:1028px;height:1px;background:#c3c3c3;"></div>
<div class="a" style="left:3px;top:682px;width:1028px;height:1px;background:#c3c3c3;"></div>
<div class="a" style="left:3px;top:708px;width:1028px;height:1px;background:#c3c3c3;"></div>
<div class="a" style="left:3px;top:409px;width:1px;height:326px;background:#c3c3c3;"></div>
<div class="a" style="left:1030px;top:409px;width:1px;height:326px;background:#c3c3c3;"></div>
<div class="a" style="left:84px;top:409px;width:1px;height:300px;background:#c3c3c3;"></div>
<div class="a" style="left:164px;top:409px;width:1px;height:300px;background:#c3c3c3;"></div>
<div class="a" style="left:256px;top:409px;width:1px;height:300px;background:#c3c3c3;"></div>
<div class="a" style="left:351px;top:409px;width:1px;height:300px;background:#c3c3c3;"></div>
<div class="a" style="left:392px;top:409px;width:1px;height:300px;background:#c3c3c3;"></div>
<div class="a" style="left:484px;top:409px;width:1px;height:300px;background:#c3c3c3;"></div>
<div class="a" style="left:530px;top:429px;width:1px;height:280px;background:#c3c3c3;"></div>
<div class="a" style="left:630px;top:429px;width:1px;height:280px;background:#c3c3c3;"></div>
<div class="a" style="left:678px;top:409px;width:1px;height:300px;background:#c3c3c3;"></div>
<div class="a" style="left:742px;top:429px;width:1px;height:280px;background:#c3c3c3;"></div>
<div class="a" style="left:807px;top:429px;width:1px;height:280px;background:#c3c3c3;"></div>
<div class="a" style="left:888px;top:409px;width:1px;height:300px;background:#c3c3c3;"></div>
<div class="a" style="left:928px;top:429px;width:1px;height:280px;background:#c3c3c3;"></div>
<div class="a" style="left:969px;top:429px;width:1px;height:280px;background:#c3c3c3;"></div>
<div class="a" style="left:4px;top:449px;width:80px;height:26px;background:#46a43c;"></div>
<div class="a" style="left:4px;top:475px;width:80px;height:26px;background:#46a43c;"></div>
<div class="a" style="left:4px;top:474px;width:80px;height:1px;background:rgb(158,196,154);"></div>
<div class="a" style="left:4px;top:501px;width:80px;height:26px;background:#bbbb00;"></div>
<div class="a" style="left:4px;top:500px;width:80px;height:1px;background:rgb(182,201,142);"></div>
<div class="a" style="left:4px;top:527px;width:80px;height:26px;background:#bbbb00;"></div>
<div class="a" style="left:4px;top:526px;width:80px;height:1px;background:rgb(205,205,130);"></div>
<div class="a" style="left:4px;top:553px;width:80px;height:26px;background:#bbbb00;"></div>
<div class="a" style="left:4px;top:552px;width:80px;height:1px;background:rgb(205,205,130);"></div>
<div class="a" style="left:4px;top:579px;width:80px;height:26px;background:#4563bb;"></div>
<div class="a" style="left:4px;top:578px;width:80px;height:1px;background:rgb(182,188,168);"></div>
<div class="a" style="left:4px;top:605px;width:80px;height:26px;background:#4563bb;"></div>
<div class="a" style="left:4px;top:604px;width:80px;height:1px;background:rgb(158,170,205);"></div>
<div class="a" style="left:4px;top:631px;width:80px;height:26px;background:#4563bb;"></div>
<div class="a" style="left:4px;top:630px;width:80px;height:1px;background:rgb(158,170,205);"></div>
<div class="a" style="left:4px;top:657px;width:80px;height:26px;background:#4563bb;"></div>
<div class="a" style="left:4px;top:656px;width:80px;height:1px;background:rgb(158,170,205);"></div>
<div class="a" style="left:4px;top:683px;width:80px;height:26px;background:#4563bb;"></div>
<div class="a" style="left:4px;top:682px;width:80px;height:1px;background:rgb(158,170,205);"></div>
<div class="a" style="left:4px;top:448px;width:80px;height:1px;background:rgba(255,255,255,0.5);"></div>
<div class="a" style="left:4px;top:708px;width:80px;height:1px;background:rgba(255,255,255,0.6);"></div>
<div class="a t" style="left:3.5px;top:410.5px;width:80px;height:38px;line-height:38px;color:#333333"><i>类型</i></div>
<div class="a t" style="left:84.5px;top:410.5px;width:79px;height:38px;line-height:38px;color:#333333"><i>日期</i></div>
<div class="a t" style="left:164.5px;top:410.5px;width:91px;height:38px;line-height:38px;color:#333333"><i>主场</i></div>
<div class="a t" style="left:256.5px;top:410.5px;width:94px;height:38px;line-height:38px;color:#333333"><i>比分</i>(<i>半场</i>)</div>
<div class="a t" style="left:351.5px;top:410.5px;width:40px;height:38px;line-height:38px;color:#333333"><i>角球</i></div>
<div class="a t" style="left:392.5px;top:410.5px;width:91px;height:38px;line-height:38px;color:#333333"><i>客场</i></div>
<div class="a t" style="left:484.5px;top:431px;width:45px;height:18px;line-height:18px;color:#333333"><i>主</i></div>
<div class="a t" style="left:530.5px;top:431px;width:99px;height:18px;line-height:18px;color:#333333"><i>让球</i></div>
<div class="a t" style="left:630.5px;top:431px;width:47px;height:18px;line-height:18px;color:#333333"><i>客</i></div>
<div class="a t" style="left:678.5px;top:431px;width:63px;height:18px;line-height:18px;color:#333333"><i>主</i></div>
<div class="a t" style="left:742.5px;top:431px;width:64px;height:18px;line-height:18px;color:#333333"><i>和</i></div>
<div class="a t" style="left:807.5px;top:431px;width:80px;height:18px;line-height:18px;color:#333333"><i>客</i></div>
<div class="a t" style="left:888.5px;top:431px;width:39px;height:18px;line-height:18px;color:#333333"><i>胜负</i></div>
<div class="a t" style="left:928.5px;top:431px;width:40px;height:18px;line-height:18px;color:#333333"><i>让球</i></div>
<div class="a t" style="left:969.5px;top:431px;width:60px;height:18px;line-height:18px;color:#333333"><i>进球数</i></div>
<select class="a sel" style="left:521px;top:410px;width:61px"><option>Crow*</option></select><select class="a sel" style="left:590px;top:410px;width:51px"><option>终指</option></select><select class="a sel" style="left:719px;top:410px;width:70px"><option>平均值</option></select><select class="a sel" style="left:796px;top:410px;width:51px"><option>终指</option></select><select class="a sel" style="left:934px;top:410px;width:51px"><option>全场</option></select>
<div class="a t" style="left:3.5px;top:450px;width:80px;height:25px;line-height:25px;color:#fff"><i>亚洲预选</i></div>
<div class="a t" style="left:84.5px;top:450px;width:79px;height:25px;line-height:25px;color:#333333">23-10-17</div>
<div class="a t" style="left:164.5px;top:450px;width:91px;height:25px;line-height:25px;color:#333333"><span class="bd">1</span><i>孟加拉国</i></div>
<div class="a t" style="left:256.5px;top:450px;width:94px;height:25px;line-height:25px;color:#333333"><span style="color:#d42020">2-1</span>(1-1)</div>
<div class="a t" style="left:351.5px;top:450px;width:40px;height:25px;line-height:25px;color:#333333">3-11</div>
<div class="a t" style="left:392.5px;top:450px;width:91px;height:25px;line-height:25px;color:#333333"><span style="color:#1a7a1a"><i>马尔代夫</i></span><span class="bd">1</span></div>
<div class="a t" style="left:484.5px;top:450px;width:45px;height:25px;line-height:25px;color:#333333">0.77</div>
<div class="a t" style="left:530.5px;top:450px;width:99px;height:25px;line-height:25px;color:#333333"><i>半</i>/<i>一</i></div>
<div class="a t" style="left:630.5px;top:450px;width:47px;height:25px;line-height:25px;color:#333333">1.05</div>
<div class="a t" style="left:678.5px;top:450px;width:63px;height:25px;line-height:25px;color:#333333">1.66</div>
<div class="a t" style="left:742.5px;top:450px;width:64px;height:25px;line-height:25px;color:#333333">3.26</div>
<div class="a t" style="left:807.5px;top:450px;width:80px;height:25px;line-height:25px;color:#333333">5.65</div>
<div class="a t" style="left:888.5px;top:450px;width:39px;height:25px;line-height:25px;color:#333333"><span style="color:#1a1aa8"><i>负</i></span></div>
<div class="a t" style="left:928.5px;top:450px;width:40px;height:25px;line-height:25px;color:#333333"><span style="color:#1a1aa8"><i>输</i></span></div>
<div class="a t" style="left:969.5px;top:450px;width:60px;height:25px;line-height:25px;color:#333333"><span style="color:#d42020"><i>大</i></span></div>
<div class="a t" style="left:3.5px;top:476px;width:80px;height:25px;line-height:25px;color:#fff"><i>亚洲预选</i></div>
<div class="a t" style="left:84.5px;top:476px;width:79px;height:25px;line-height:25px;color:#333333">23-10-12</div>
<div class="a t" style="left:164.5px;top:476px;width:91px;height:25px;line-height:25px;color:#333333"><span style="color:#1a7a1a"><i>马尔代夫</i></span></div>
<div class="a t" style="left:256.5px;top:476px;width:94px;height:25px;line-height:25px;color:#333333"><span style="color:#d42020">1-1</span>(0-0)</div>
<div class="a t" style="left:351.5px;top:476px;width:40px;height:25px;line-height:25px;color:#333333">7-3</div>
<div class="a t" style="left:392.5px;top:476px;width:91px;height:25px;line-height:25px;color:#333333"><i>孟加拉国</i></div>
<div class="a t" style="left:484.5px;top:476px;width:45px;height:25px;line-height:25px;color:#333333">0.91</div>
<div class="a t" style="left:530.5px;top:476px;width:99px;height:25px;line-height:25px;color:#333333"><i>平手</i></div>
<div class="a t" style="left:630.5px;top:476px;width:47px;height:25px;line-height:25px;color:#333333">0.91</div>
<div class="a t" style="left:678.5px;top:476px;width:63px;height:25px;line-height:25px;color:#333333">2.63</div>
<div class="a t" style="left:742.5px;top:476px;width:64px;height:25px;line-height:25px;color:#333333">2.92</div>
<div class="a t" style="left:807.5px;top:476px;width:80px;height:25px;line-height:25px;color:#333333">2.72</div>
<div class="a t" style="left:888.5px;top:476px;width:39px;height:25px;line-height:25px;color:#333333"><span style="color:#117711"><i>平</i></span></div>
<div class="a t" style="left:928.5px;top:476px;width:40px;height:25px;line-height:25px;color:#333333"><span style="color:#117711"><i>走</i></span></div>
<div class="a t" style="left:969.5px;top:476px;width:60px;height:25px;line-height:25px;color:#333333"><span style="color:#117711"><i>走</i></span></div>
<div class="a t" style="left:3.5px;top:502px;width:80px;height:25px;line-height:25px;color:#fff"><i>黄金杯</i></div>
<div class="a t" style="left:84.5px;top:502px;width:79px;height:25px;line-height:25px;color:#333333">23-06-28</div>
<div class="a t" style="left:164.5px;top:502px;width:91px;height:25px;line-height:25px;color:#333333"><i>黎巴嫩</i></div>
<div class="a t" style="left:256.5px;top:502px;width:94px;height:25px;line-height:25px;color:#333333"><span style="color:#d42020">1-0</span>(1-0)</div>
<div class="a t" style="left:351.5px;top:502px;width:40px;height:25px;line-height:25px;color:#333333">5-6</div>
<div class="a t" style="left:392.5px;top:502px;width:91px;height:25px;line-height:25px;color:#333333"><span style="color:#1a7a1a"><i>马尔代夫</i></span></div>
<div class="a t" style="left:484.5px;top:502px;width:45px;height:25px;line-height:25px;color:#333333">0.90</div>
<div class="a t" style="left:530.5px;top:502px;width:99px;height:25px;line-height:25px;color:#333333"><i>两</i>/<i>两球半</i></div>
<div class="a t" style="left:630.5px;top:502px;width:47px;height:25px;line-height:25px;color:#333333">0.92</div>
<div class="a t" style="left:678.5px;top:502px;width:63px;height:25px;line-height:25px;color:#333333">1.09</div>
<div class="a t" style="left:742.5px;top:502px;width:64px;height:25px;line-height:25px;color:#333333">8.23</div>
<div class="a t" style="left:807.5px;top:502px;width:80px;height:25px;line-height:25px;color:#333333">20.51</div>
<div class="a t" style="left:888.5px;top:502px;width:39px;height:25px;line-height:25px;color:#333333"><span style="color:#1a1aa8"><i>负</i></span></div>
<div class="a t" style="left:928.5px;top:502px;width:40px;height:25px;line-height:25px;color:#333333"><span style="color:#d42020"><i>赢</i></span></div>
<div class="a t" style="left:969.5px;top:502px;width:60px;height:25px;line-height:25px;color:#333333"><span style="color:#1a1aa8"><i>小</i></span></div>
<div class="a t" style="left:3.5px;top:528px;width:80px;height:25px;line-height:25px;color:#fff"><i>黄金杯</i></div>
<div class="a t" style="left:84.5px;top:528px;width:79px;height:25px;line-height:25px;color:#333333">23-06-25</div>
<div class="a t" style="left:164.5px;top:528px;width:91px;height:25px;line-height:25px;color:#333333"><i>孟加拉国</i></div>
<div class="a t" style="left:256.5px;top:528px;width:94px;height:25px;line-height:25px;color:#333333"><span style="color:#d42020">3-1</span>(1-1)</div>
<div class="a t" style="left:351.5px;top:528px;width:40px;height:25px;line-height:25px;color:#333333">11-2</div>
<div class="a t" style="left:392.5px;top:528px;width:91px;height:25px;line-height:25px;color:#333333"><span style="color:#1a7a1a"><i>马尔代夫</i></span></div>
<div class="a t" style="left:484.5px;top:528px;width:45px;height:25px;line-height:25px;color:#333333">0.95</div>
<div class="a t" style="left:530.5px;top:528px;width:99px;height:25px;line-height:25px;color:#333333"><i>半</i>/<i>一</i></div>
<div class="a t" style="left:630.5px;top:528px;width:47px;height:25px;line-height:25px;color:#333333">0.75</div>
<div class="a t" style="left:678.5px;top:528px;width:63px;height:25px;line-height:25px;color:#333333">1.83</div>
<div class="a t" style="left:742.5px;top:528px;width:64px;height:25px;line-height:25px;color:#333333">3.29</div>
<div class="a t" style="left:807.5px;top:528px;width:80px;height:25px;line-height:25px;color:#333333">4.14</div>
<div class="a t" style="left:888.5px;top:528px;width:39px;height:25px;line-height:25px;color:#333333"><span style="color:#1a1aa8"><i>负</i></span></div>
<div class="a t" style="left:928.5px;top:528px;width:40px;height:25px;line-height:25px;color:#333333"><span style="color:#1a1aa8"><i>输</i></span></div>
<div class="a t" style="left:969.5px;top:528px;width:60px;height:25px;line-height:25px;color:#333333"><span style="color:#d42020"><i>大</i></span></div>
<div class="a t" style="left:3.5px;top:554px;width:80px;height:25px;line-height:25px;color:#fff"><i>黄金杯</i></div>
<div class="a t" style="left:84.5px;top:554px;width:79px;height:25px;line-height:25px;color:#333333">23-06-22</div>
<div class="a t" style="left:164.5px;top:554px;width:91px;height:25px;line-height:25px;color:#333333"><span class="bd">1</span><span style="color:#1a7a1a"><i>马尔代夫</i></span></div>
<div class="a t" style="left:256.5px;top:554px;width:94px;height:25px;line-height:25px;color:#333333"><span style="color:#d42020">2-0</span>(1-0)</div>
<div class="a t" style="left:351.5px;top:554px;width:40px;height:25px;line-height:25px;color:#333333">4-7</div>
<div class="a t" style="left:392.5px;top:554px;width:91px;height:25px;line-height:25px;color:#333333"><i>不丹</i></div>
<div class="a t" style="left:484.5px;top:554px;width:45px;height:25px;line-height:25px;color:#333333">0.89</div>
<div class="a t" style="left:530.5px;top:554px;width:99px;height:25px;line-height:25px;color:#333333"><i>球半</i>/<i>两</i></div>
<div class="a t" style="left:630.5px;top:554px;width:47px;height:25px;line-height:25px;color:#333333">0.93</div>
<div class="a t" style="left:678.5px;top:554px;width:63px;height:25px;line-height:25px;color:#333333">1.24</div>
<div class="a t" style="left:742.5px;top:554px;width:64px;height:25px;line-height:25px;color:#333333">5.51</div>
<div class="a t" style="left:807.5px;top:554px;width:80px;height:25px;line-height:25px;color:#333333">8.99</div>
<div class="a t" style="left:888.5px;top:554px;width:39px;height:25px;line-height:25px;color:#333333"><span style="color:#d42020"><i>胜</i></span></div>
<div class="a t" style="left:928.5px;top:554px;width:40px;height:25px;line-height:25px;color:#333333"><span style="color:#d42020"><i>赢</i></span></div>
<div class="a t" style="left:969.5px;top:554px;width:60px;height:25px;line-height:25px;color:#333333"><span style="color:#1a1aa8"><i>小</i></span></div>
<div class="a t" style="left:3.5px;top:580px;width:80px;height:25px;line-height:25px;color:#fff"><i>国际友谊</i></div>
<div class="a t" style="left:84.5px;top:580px;width:79px;height:25px;line-height:25px;color:#333333">23-03-21</div>
<div class="a t" style="left:164.5px;top:580px;width:91px;height:25px;line-height:25px;color:#333333"><span style="color:#1a7a1a"><i>马尔代夫</i></span></div>
<div class="a t" style="left:256.5px;top:580px;width:94px;height:25px;line-height:25px;color:#333333"><span style="color:#d42020">1-0</span>(1-0)</div>
<div class="a t" style="left:351.5px;top:580px;width:40px;height:25px;line-height:25px;color:#333333">0-0</div>
<div class="a t" style="left:392.5px;top:580px;width:91px;height:25px;line-height:25px;color:#333333"><i>巴基斯坦</i></div>
<div class="a t" style="left:888.5px;top:580px;width:39px;height:25px;line-height:25px;color:#333333"><span style="color:#d42020"><i>胜</i></span></div>
<div class="a t" style="left:3.5px;top:606px;width:80px;height:25px;line-height:25px;color:#fff"><i>国际友谊</i></div>
<div class="a t" style="left:84.5px;top:606px;width:79px;height:25px;line-height:25px;color:#333333">22-12-17</div>
<div class="a t" style="left:164.5px;top:606px;width:91px;height:25px;line-height:25px;color:#333333"><i>新加坡</i></div>
<div class="a t" style="left:256.5px;top:606px;width:94px;height:25px;line-height:25px;color:#333333"><span style="color:#d42020">3-1</span>(1-1)</div>
<div class="a t" style="left:351.5px;top:606px;width:40px;height:25px;line-height:25px;color:#333333">6-1</div>
<div class="a t" style="left:392.5px;top:606px;width:91px;height:25px;line-height:25px;color:#333333"><span style="color:#1a7a1a"><i>马尔代夫</i></span></div>
<div class="a t" style="left:484.5px;top:606px;width:45px;height:25px;line-height:25px;color:#333333">1.02</div>
<div class="a t" style="left:530.5px;top:606px;width:99px;height:25px;line-height:25px;color:#333333"><i>一</i>/<i>球半</i></div>
<div class="a t" style="left:630.5px;top:606px;width:47px;height:25px;line-height:25px;color:#333333">0.80</div>
<div class="a t" style="left:678.5px;top:606px;width:63px;height:25px;line-height:25px;color:#333333">1.35</div>
<div class="a t" style="left:742.5px;top:606px;width:64px;height:25px;line-height:25px;color:#333333">4.74</div>
<div class="a t" style="left:807.5px;top:606px;width:80px;height:25px;line-height:25px;color:#333333">7.94</div>
<div class="a t" style="left:888.5px;top:606px;width:39px;height:25px;line-height:25px;color:#333333"><span style="color:#1a1aa8"><i>负</i></span></div>
<div class="a t" style="left:928.5px;top:606px;width:40px;height:25px;line-height:25px;color:#333333"><span style="color:#1a1aa8"><i>输</i></span></div>
<div class="a t" style="left:969.5px;top:606px;width:60px;height:25px;line-height:25px;color:#333333"><span style="color:#d42020"><i>大</i></span></div>
<div class="a t" style="left:3.5px;top:632px;width:80px;height:25px;line-height:25px;color:#fff"><i>国际友谊</i></div>
<div class="a t" style="left:84.5px;top:632px;width:79px;height:25px;line-height:25px;color:#333333">22-12-14</div>
<div class="a t" style="left:164.5px;top:632px;width:91px;height:25px;line-height:25px;color:#333333"><i>马来西亚</i></div>
<div class="a t" style="left:256.5px;top:632px;width:94px;height:25px;line-height:25px;color:#333333"><span style="color:#d42020">3-0</span>(1-0)</div>
<div class="a t" style="left:351.5px;top:632px;width:40px;height:25px;line-height:25px;color:#333333">10-1</div>
<div class="a t" style="left:392.5px;top:632px;width:91px;height:25px;line-height:25px;color:#333333"><span style="color:#1a7a1a"><i>马尔代夫</i></span></div>
<div class="a t" style="left:484.5px;top:632px;width:45px;height:25px;line-height:25px;color:#333333">0.94</div>
<div class="a t" style="left:530.5px;top:632px;width:99px;height:25px;line-height:25px;color:#333333"><i>两</i>/<i>两球半</i></div>
<div class="a t" style="left:630.5px;top:632px;width:47px;height:25px;line-height:25px;color:#333333">0.82</div>
<div class="a t" style="left:678.5px;top:632px;width:63px;height:25px;line-height:25px;color:#333333">1.12</div>
<div class="a t" style="left:742.5px;top:632px;width:64px;height:25px;line-height:25px;color:#333333">7.88</div>
<div class="a t" style="left:807.5px;top:632px;width:80px;height:25px;line-height:25px;color:#333333">17.42</div>
<div class="a t" style="left:888.5px;top:632px;width:39px;height:25px;line-height:25px;color:#333333"><span style="color:#1a1aa8"><i>负</i></span></div>
<div class="a t" style="left:928.5px;top:632px;width:40px;height:25px;line-height:25px;color:#333333"><span style="color:#1a1aa8"><i>输</i></span></div>
<div class="a t" style="left:969.5px;top:632px;width:60px;height:25px;line-height:25px;color:#333333"><span style="color:#1a1aa8"><i>小</i></span></div>
<div class="a t" style="left:3.5px;top:658px;width:80px;height:25px;line-height:25px;color:#fff"><i>国际友谊</i></div>
<div class="a t" style="left:84.5px;top:658px;width:79px;height:25px;line-height:25px;color:#333333">22-09-24</div>
<div class="a t" style="left:164.5px;top:658px;width:91px;height:25px;line-height:25px;color:#333333"><i>老挝</i></div>
<div class="a t" style="left:256.5px;top:658px;width:94px;height:25px;line-height:25px;color:#333333"><span style="color:#d42020">1-3</span>(1-1)</div>
<div class="a t" style="left:351.5px;top:658px;width:40px;height:25px;line-height:25px;color:#333333">0-0</div>
<div class="a t" style="left:392.5px;top:658px;width:91px;height:25px;line-height:25px;color:#333333"><span style="color:#1a7a1a"><i>马尔代夫</i></span></div>
<div class="a t" style="left:678.5px;top:658px;width:63px;height:25px;line-height:25px;color:#333333">3.88</div>
<div class="a t" style="left:742.5px;top:658px;width:64px;height:25px;line-height:25px;color:#333333">3.50</div>
<div class="a t" style="left:807.5px;top:658px;width:80px;height:25px;line-height:25px;color:#333333">1.80</div>
<div class="a t" style="left:888.5px;top:658px;width:39px;height:25px;line-height:25px;color:#333333"><span style="color:#d42020"><i>胜</i></span></div>
<div class="a t" style="left:3.5px;top:684px;width:80px;height:25px;line-height:25px;color:#fff"><i>国际友谊</i></div>
<div class="a t" style="left:84.5px;top:684px;width:79px;height:25px;line-height:25px;color:#333333">22-09-21</div>
<div class="a t" style="left:164.5px;top:684px;width:91px;height:25px;line-height:25px;color:#333333"><i>文莱</i></div>
<div class="a t" style="left:256.5px;top:684px;width:94px;height:25px;line-height:25px;color:#333333"><span style="color:#d42020">0-3</span>(0-1)</div>
<div class="a t" style="left:351.5px;top:684px;width:40px;height:25px;line-height:25px;color:#333333">0-0</div>
<div class="a t" style="left:392.5px;top:684px;width:91px;height:25px;line-height:25px;color:#333333"><span style="color:#1a7a1a"><i>马尔代夫</i></span></div>
<div class="a t" style="left:888.5px;top:684px;width:39px;height:25px;line-height:25px;color:#333333"><span style="color:#d42020"><i>胜</i></span></div>
<div class="a t" style="left:2.5px;top:710px;width:1028px;height:25px;line-height:25px;color:#333333;letter-spacing:0.16px"><i>近</i><span style="color:#d42020">10</span><i>场</i>,<i>胜</i>4<i>平</i>1<i>负</i>5, <i>胜率</i>:<span style="color:#d42020">40%</span> <i>让胜率</i>:<span style="color:#d42020">28.6%</span> <i>大率</i>:<span style="color:#d42020">42.9%</span> <i>单率</i>:<span style="color:#d42020">50%</span></div>
</body></html>
